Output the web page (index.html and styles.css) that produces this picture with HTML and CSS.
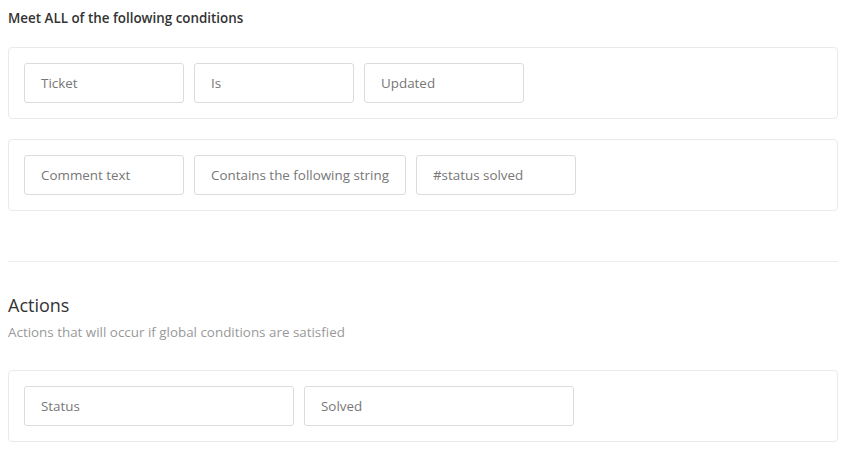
FILE: index.html
```html
<!DOCTYPE html>
<html>
<head>
<meta charset="utf-8">
<link rel="stylesheet" href="styles.css">
</head>
<body>
<div class="page">
  <div class="cond-title">Meet ALL of the following conditions</div>
  <div class="card">
    <div class="field">Ticket</div>
    <div class="field">Is</div>
    <div class="field">Updated</div>
  </div>
  <div class="card">
    <div class="field">Comment text</div>
    <div class="field">Contains the following string</div>
    <div class="field">#status solved</div>
  </div>
  <hr class="divider">
  <div class="section-title">Actions</div>
  <div class="section-sub">Actions that will occur if global conditions are satisfied</div>
  <div class="card">
    <div class="field wide">Status</div>
    <div class="field wide">Solved</div>
  </div>
</div>
</body>
</html>
```
FILE: styles.css
```css
html, body {
  margin: 0;
  padding: 0;
  background: #ffffff;
}
body {
  font-family: "Open Sans", "Noto Sans", sans-serif;
  color: #333333;
}
.page {
  padding: 8px 12px 0 8px;
  display: flex;
  flex-direction: column;
}
.cond-title {
  font-size: 13.4px;
  font-weight: 600;
  color: #333;
  line-height: 20px;
  margin-bottom: 19px;
}
.card {
  border: 1px solid #eaeaea;
  border-radius: 4px;
  padding: 15px;
  display: flex;
  gap: 10px;
  margin-bottom: 20px;
}
.field {
  box-sizing: border-box;
  height: 40px;
  min-width: 160px;
  padding: 0 16px;
  border: 1px solid #dcdcdc;
  border-radius: 3px;
  display: flex;
  align-items: center;
  font-size: 13.4px;
  color: #777;
  white-space: nowrap;
}
.field.wide {
  width: 270px;
}
.divider {
  border: 0;
  border-top: 1px solid #ececec;
  margin: 30px 0 0 0;
}
.section-title {
  margin-top: 31px;
  font-size: 18px;
  line-height: 24px;
  color: #333;
}
.section-sub {
  margin-top: 6px;
  font-size: 13.4px;
  line-height: 18px;
  color: #999;
  margin-bottom: 29px;
}
```
